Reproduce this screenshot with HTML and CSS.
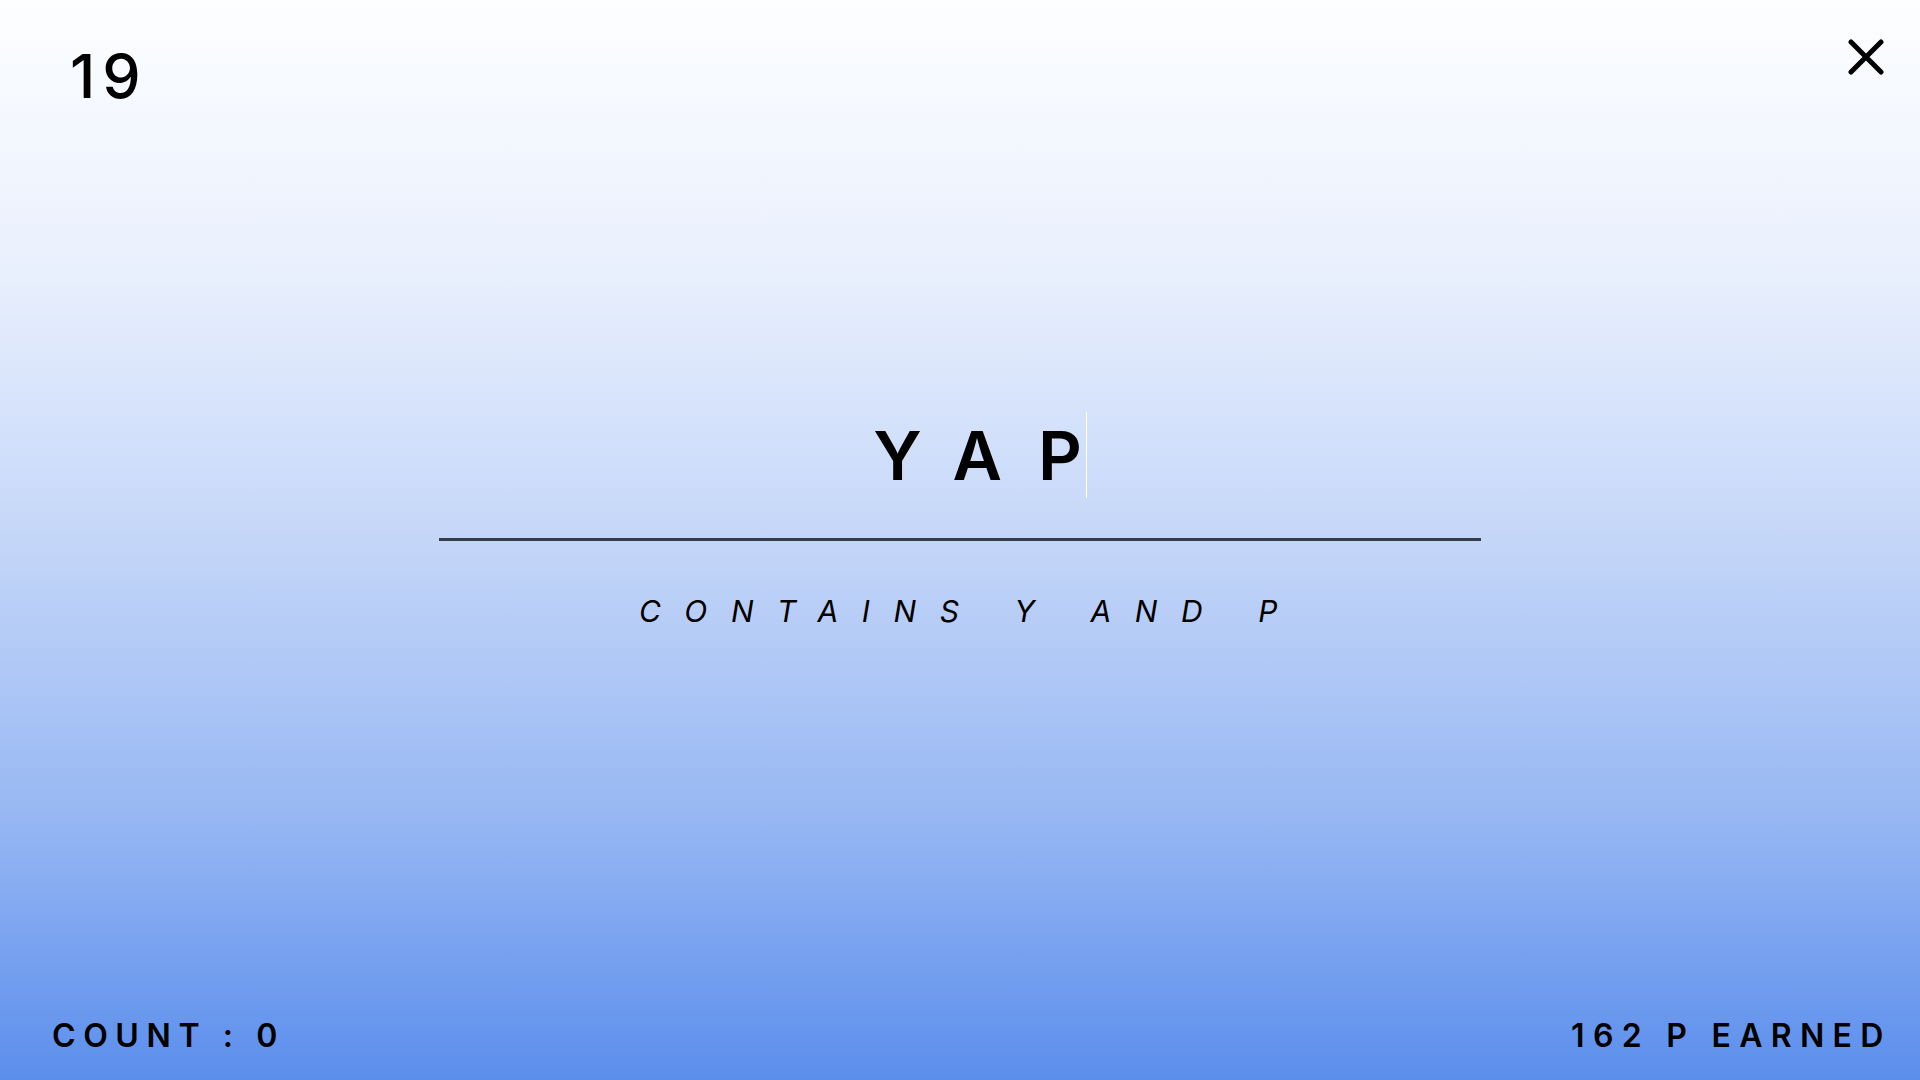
FILE: index.html
```html
<!DOCTYPE html>
<html lang="en">
<head>
<meta charset="utf-8">
<title>Word Game</title>
<link rel="stylesheet" href="styles.css">
</head>
<body>
<div class="screen">
  <header class="top">
    <span class="level">19</span>
    <button class="close" aria-label="Close">
      <svg width="36" height="36" viewBox="0 0 36 36"><path d="M3 3 L33 33 M33 3 L3 33" stroke="#000" stroke-width="5" stroke-linecap="round" fill="none"/></svg>
    </button>
  </header>
  <main class="center">
    <div class="word"><span class="letters">YAP</span><span class="caret"></span></div>
    <div class="rule"></div>
    <p class="hint">CONTAINS Y AND P</p>
  </main>
  <footer class="bottom">
    <span class="count">COUNT : 0</span>
    <span class="earned">162 P EARNED</span>
  </footer>
</div>
</body>
</html>
```
FILE: styles.css
```css
html, body {
  margin: 0;
  padding: 0;
  height: 100%;
}
body {
  font-family: Inter, "Liberation Sans", sans-serif;
  color: #000;
}
.screen {
  height: 1080px;
  display: flex;
  flex-direction: column;
  background: linear-gradient(180deg, #fdfeff 0%, #e9f0fd 25%, #c4d6f8 50%, #98b8f3 75%, #5b8eec 100%);
  box-sizing: border-box;
}
.top {
  display: flex;
  justify-content: space-between;
  align-items: flex-start;
  padding: 39px 36px 0 70px;
}
.level {
  margin-top: 7px;
  font-size: 61px;
  line-height: 61px;
  font-weight: 500;
  letter-spacing: 7px;
}
.close {
  width: 36px;
  height: 36px;
  padding: 0;
  border: 0;
  background: none;
  display: block;
}
.close svg { display: block; }
.center {
  display: flex;
  flex-direction: column;
  align-items: center;
}
.word {
  margin-top: 305px;
  padding-left: 40px;
  display: flex;
  align-items: stretch;
  height: 86px;
}
.letters {
  font-size: 68px;
  line-height: 86px;
  font-weight: 600;
  letter-spacing: 36px;
  margin-right: -36px;
}
.caret {
  width: 1px;
  margin-left: 4px;
  background: #ffffff;
}
.rule {
  margin-top: 40px;
  width: 1042px;
  height: 3px;
  background: #363d4a;
}
.hint {
  margin: 55px 0 0;
  font-size: 30px;
  line-height: 30px;
  font-style: italic;
  font-weight: 400;
  letter-spacing: 23.6px;
  padding-left: 20px;
}
.bottom {
  margin-top: auto;
  display: flex;
  justify-content: space-between;
  padding: 0 29px 28px 52px;
  font-size: 32px;
  line-height: 32px;
  font-weight: 600;
  letter-spacing: 7.6px;
}
.earned {
  letter-spacing: 8.3px;
  margin-right: -0.7px;
}
```
